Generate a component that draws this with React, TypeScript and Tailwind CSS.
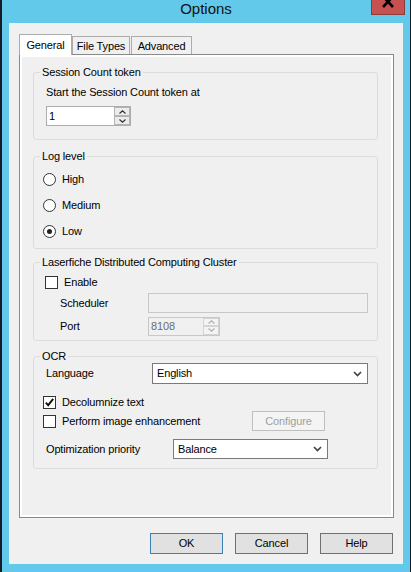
import React from "react";

const base =
  "font-['Liberation_Sans',Arial,sans-serif] text-[11px] leading-[13px] tracking-[-0.15px] text-black";

function Group({
  title,
  className,
  children,
}: {
  title: string;
  className: string;
  children: React.ReactNode;
}) {
  return (
    <fieldset className={`w-[345px] rounded-[3px] border border-[#dcdcdc] ${className}`}>
      <legend className="ml-[6px] px-[2px]">{title}</legend>
      {children}
    </fieldset>
  );
}

function SpinArrow({ up, disabled }: { up?: boolean; disabled?: boolean }) {
  return (
    <div
      className={`flex flex-1 items-center justify-center border ${
        disabled ? "border-[#d4d4d4] bg-[#f4f4f4]" : "border-[#b4b4b4] bg-[#ececec]"
      }`}
    >
      <svg width="7" height="4" viewBox="0 0 7 4">
        <path
          d={up ? "M0.5 3.5L3.5 0.8L6.5 3.5" : "M0.5 0.5L3.5 3.2L6.5 0.5"}
          stroke={disabled ? "#b0b0b0" : "#333"}
          strokeWidth="1.2"
          fill="none"
        />
      </svg>
    </div>
  );
}

function Spinner({ value, disabled, className }: { value: string; disabled?: boolean; className: string }) {
  return (
    <div
      className={`flex border ${
        disabled ? "border-[#c8c8c8] bg-[#f0f0f0] text-[#6d6d6d]" : "border-[#abadb3] bg-white"
      } ${className}`}
    >
      <div className="flex flex-1 items-center pl-[2px]">{value}</div>
      <div className="flex w-[16px] flex-col">
        <SpinArrow up disabled={disabled} />
        <SpinArrow disabled={disabled} />
      </div>
    </div>
  );
}

function Select({ value, className }: { value: string; className: string }) {
  return (
    <div
      className={`flex items-center justify-between border border-[#7a7a7a] bg-white pl-[4px] pr-[5px] ${className}`}
    >
      <span>{value}</span>
      <svg width="9" height="6" viewBox="0 0 9 6">
        <path d="M1 1l3.5 3.6L8 1" stroke="#404040" strokeWidth="1.6" fill="none" />
      </svg>
    </div>
  );
}

function Radio({ label, checked }: { label: string; checked?: boolean }) {
  return (
    <div className="flex h-[16px] items-center gap-[6px]">
      <div className="flex h-[13px] w-[13px] items-center justify-center rounded-full border border-[#333] bg-white">
        {checked && <div className="h-[5px] w-[5px] rounded-full bg-[#222]" />}
      </div>
      <span>{label}</span>
    </div>
  );
}

function Check({ label, checked }: { label: string; checked?: boolean }) {
  return (
    <div className="flex h-[16px] items-center gap-[6px]">
      <div className="flex h-[13px] w-[13px] items-center justify-center border border-[#333] bg-white">
        {checked && (
          <svg width="11" height="11" viewBox="0 0 11 11">
            <path d="M1.8 5.6L4.2 8.2L9.2 1.8" stroke="#111" strokeWidth="1.9" fill="none" />
          </svg>
        )}
      </div>
      <span>{label}</span>
    </div>
  );
}

function Button({ label, primary }: { label: string; primary?: boolean }) {
  return (
    <div
      className={`flex h-[21px] w-[73px] items-center justify-center border bg-[#e1e1e1] ${
        primary ? "border-[#3c7fb1]" : "border-[#707070]"
      }`}
    >
      {label}
    </div>
  );
}

export default function App() {
  return (
    <div className={`flex h-[572px] w-[411px] overflow-hidden bg-[#15171f] ${base}`}>
      <div className="w-[2px] bg-[#181b28]" />
      <div className="flex w-[408px] flex-col bg-[#63c9ea] px-[7px] pb-[8px]">
        <div className="relative flex h-[23px] justify-center">
          <span className="text-[15px] leading-[18px] tracking-normal text-[#111]">Options</span>
          <div className="absolute right-[-2px] top-0 flex h-[15px] w-[34px] items-end justify-center overflow-hidden border border-t-0 border-[#8a3b3b] bg-[#c75050] pb-[6px]">
            <svg width="12" height="9" viewBox="0 0 12 9">
              <path d="M1 -2.5L11 8M11 -2.5L1 8" stroke="#000" strokeWidth="2.6" />
            </svg>
          </div>
        </div>

        <div className="flex flex-1 flex-col bg-[#f0f0f0] pl-[10px] pr-[9px] pt-[11px]">
          <div className="relative z-10 flex h-[21px] items-end">
            <div className="flex h-[21px] w-[53px] justify-center border border-b-0 border-[#acacac] bg-white pt-[4px]">
              General
            </div>
            <div className="mb-[1px] flex h-[18px] w-[58px] justify-center border border-b-0 border-[#acacac] bg-[#f0f0f0] pt-[3px]">
              File Types
            </div>
            <div className="mb-[1px] ml-[1px] flex h-[18px] w-[61px] justify-center border border-b-0 border-[#acacac] bg-[#f0f0f0] pt-[3px]">
              Advanced
            </div>
          </div>

          <div className="mt-[-1px] h-[464px] w-[375px] border border-[#898989] bg-white p-[2px]">
            <div className="flex h-full flex-col bg-[#f0f0f0] pl-[11px] pt-[9px]">
              <Group title="Session Count token" className="">
                <div className="pb-[13px] pl-[12px] pt-[7px]">
                  <div>Start the Session Count token at</div>
                  <Spinner value="1" className="mt-[7px] h-[20px] w-[85px]" />
                </div>
              </Group>

              <Group title="Log level" className="mt-[10px]">
                <div className="flex flex-col gap-[10px] pb-[9px] pl-[9px] pt-[8px]">
                  <Radio label="High" />
                  <Radio label="Medium" />
                  <Radio label="Low" checked />
                </div>
              </Group>

              <Group title="Laserfiche Distributed Computing Cluster" className="mt-[7px]">
                <div className="pb-[4px] pt-[5px]">
                  <div className="pl-[11px]">
                    <Check label="Enable" />
                  </div>
                  <div className="mt-[3px] flex h-[20px] items-center pl-[26px]">
                    <span className="w-[88px]">Scheduler</span>
                    <div className="h-[20px] w-[220px] border border-[#c8c8c8] bg-[#f0f0f0]" />
                  </div>
                  <div className="mt-[3px] flex h-[20px] items-center pl-[26px]">
                    <span className="w-[88px]">Port</span>
                    <Spinner value="8108" disabled className="h-[19px] w-[72px]" />
                  </div>
                </div>
              </Group>

              <Group title="OCR" className="mt-[9px]">
                <div className="pb-[9px]">
                  <div className="flex h-[21px] items-center pl-[12px]">
                    <span className="w-[106px]">Language</span>
                    <Select value="English" className="h-[21px] w-[216px]" />
                  </div>
                  <div className="mt-[10px] pl-[9px]">
                    <Check label="Decolumnize text" checked />
                  </div>
                  <div className="mt-[1px] flex h-[20px] items-center pl-[9px]">
                    <div className="w-[209px]">
                      <Check label="Perform image enhancement" />
                    </div>
                    <div className="flex h-[20px] w-[73px] items-center justify-center border border-[#bfbfbf] bg-[#f4f4f4] text-[#a0a0a0]">
                      Configure
                    </div>
                  </div>
                  <div className="mt-[8px] flex h-[20px] items-center pl-[12px]">
                    <span className="w-[127px]">Optimization priority</span>
                    <Select value="Balance" className="h-[20px] w-[155px]" />
                  </div>
                </div>
              </Group>
            </div>
          </div>

          <div className="mr-[1px] mt-[15px] flex justify-end gap-[12px]">
            <Button label="OK" primary />
            <Button label="Cancel" />
            <Button label="Help" />
          </div>
        </div>
      </div>
      <div className="w-[1px] bg-[#181b28]" />
    </div>
  );
}
